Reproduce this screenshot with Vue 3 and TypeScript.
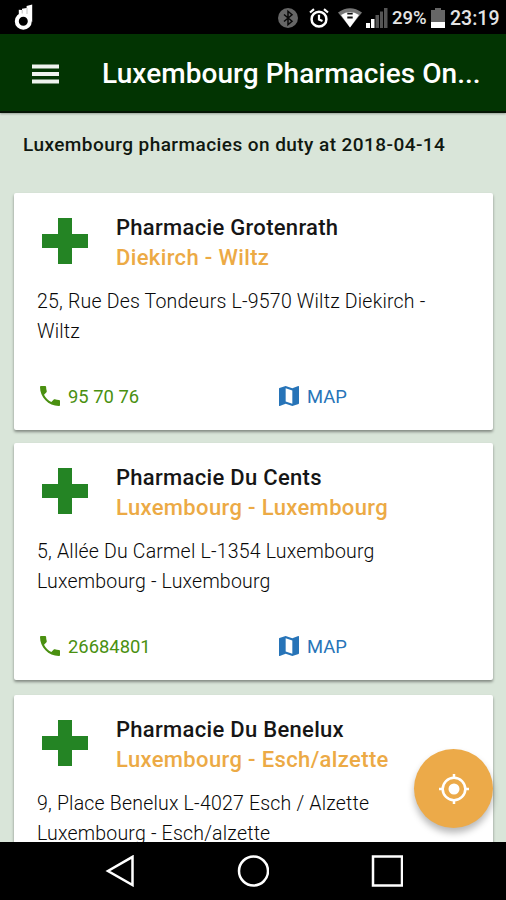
<script setup lang="ts">
interface Pharmacy {
  name: string
  region: string
  address: string[]
  phone: string
}

const pharmacies: Pharmacy[] = [
  {
    name: 'Pharmacie Grotenrath',
    region: 'Diekirch - Wiltz',
    address: ['25, Rue Des Tondeurs L-9570 Wiltz Diekirch -', 'Wiltz'],
    phone: '95 70 76',
  },
  {
    name: 'Pharmacie Du Cents',
    region: 'Luxembourg - Luxembourg',
    address: ['5, Allée Du Carmel L-1354 Luxembourg', 'Luxembourg - Luxembourg'],
    phone: '26684801',
  },
  {
    name: 'Pharmacie Du Benelux',
    region: 'Luxembourg - Esch/alzette',
    address: ['9, Place Benelux L-4027 Esch / Alzette', 'Luxembourg - Esch/alzette'],
    phone: '',
  },
]
</script>

<template>
  <div class="screen">
    <div class="status">
      <svg class="hand" viewBox="0 0 20 26">
        <circle cx="9.3" cy="17.200" r="6.500" fill="none" stroke="#fff" stroke-width="4" />
        <path d="M4.800 12V5.800L8 6V4.800L12.600 4V2L18.200 .5V18L15 14.500Q13 11.500 9 11.500Z" fill="#fff" />
        <path d="M8.200 6V9.500M13 4V10" stroke="#999" stroke-width=".6" />
      </svg>
      <div class="indicators">
        <svg class="bluetooth" viewBox="0 0 20 20">
          <circle cx="10" cy="10" r="10" fill="#666" />
          <path d="M6 6.5L14 13.3L10 16.7V3.3L14 6.7L6 13.5" fill="none" stroke="#080808" stroke-width="1.5" />
        </svg>
        <svg class="alarm" viewBox="0 0 20 20">
          <circle cx="10" cy="11.2" r="7.4" fill="none" stroke="#fff" stroke-width="2.5" />
          <path d="M10 6.7V11.5L13.5 13M1 4.5L5 1.2M19 4.5L15 1.2" fill="none" stroke="#fff" stroke-width="2.200" />
        </svg>
        <svg class="wifi" viewBox="0 0 24 20">
          <path d="M0 4.5Q12-4 24 4.5L12 19.5Z" fill="#777" />
          <path d="M3 7Q12 1 21 7L12 19.5Z" fill="#fff" />
          <path d="M9.3 5.600H14.7M9.3 9.500H14.7" stroke="#111" stroke-width="1.8" />
        </svg>
        <svg class="signal" viewBox="0 0 22 20">
          <path d="M0 15h4v5H0zM5 11h3.5v9H5z" fill="#fff" />
          <path d="M9.5 7H13v13H9.500zM14 3.500h3V20h-3zM18 0h3.500v20H18z" fill="#555" />
        </svg>
        <span class="percent">29%</span>
        <svg class="battery" viewBox="0 0 14 20">
          <path d="M4 0h6v2h4v12H0V2h4z" fill="#666" />
          <path d="M0 14h14v6H0z" fill="#fff" />
        </svg>
        <span class="clock">23:19</span>
      </div>
    </div>
    <header class="appbar">
      <svg class="menu" viewBox="0 0 27 20">
        <path d="M0 2.500h27M0 10h27M0 17.500h27" stroke="#eef2ee" stroke-width="4" />
      </svg>
      <h1 class="title">Luxembourg Pharmacies On...</h1>
    </header>
    <main class="content">
      <p class="notice">Luxembourg pharmacies on duty at 2018-04-14</p>
      <div class="list">
        <article v-for="p in pharmacies" :key="p.name" class="card">
          <div class="head">
            <svg class="cross" viewBox="0 0 46 46">
              <path d="M16 0h14v16h16v14H30v16H16V30H0V16h16z" fill="#248424" />
            </svg>
            <div>
              <h2 class="name">{{ p.name }}</h2>
              <h3 class="region">{{ p.region }}</h3>
            </div>
          </div>
          <p class="address">
            <span v-for="line in p.address" :key="line" class="line">{{ line }}</span>
          </p>
          <div v-if="p.phone" class="actions">
            <a class="action call">
              <svg class="icon" viewBox="3 3 18 18">
                <path fill="currentColor" d="M6.620 10.790c1.440 2.830 3.760 5.140 6.590 6.590l2.200-2.200c.27-.27.67-.36 1.020-.24 1.120.37 2.330.57 3.570.57.55 0 1 .45 1 1V20c0 .55-.45 1-1 1-9.390 0-17-7.610-17-17 0-.55.45-1 1-1h3.500c.55 0 1 .45 1 1 0 1.250.2 2.450.57 3.570.11.35.03.74-.25 1.020l-2.200 2.200z" />
              </svg>
              <span>{{ p.phone }}</span>
            </a>
            <a class="action map">
              <svg class="icon" viewBox="3 3 18 18">
                <path fill="currentColor" d="M20.500 3l-.16.03L15 5.100 9 3 3.360 4.900c-.21.07-.36.25-.36.48V20.500c0 .28.22.5.5.5l.16-.03L9 18.900l6 2.100 5.640-1.900c.21-.07.36-.25.36-.48V3.500c0-.28-.22-.5-.5-.5zM15 19l-6-2.110V5l6 2.110V19z" />
              </svg>
              <span>MAP</span>
            </a>
          </div>
        </article>
      </div>
    </main>
    <button class="fab" aria-label="Locate">
      <svg class="locate" viewBox="0 0 30 30">
        <circle cx="15" cy="15" r="11.300" fill="none" stroke="#fff" stroke-width="2.500" />
        <circle cx="15" cy="15" r="5.500" fill="#fff" />
        <path d="M15 0v4M15 26v4M0 15h4M26 15h4" stroke="#fff" stroke-width="2.500" />
      </svg>
    </button>
    <nav class="navbar">
      <svg class="nav-icon" viewBox="0 0 32 32">
        <path d="M29.500 1.800V30L5 16Z" fill="none" stroke="#fff" stroke-width="2.500" />
      </svg>
      <svg class="nav-icon" viewBox="0 0 32 32">
        <circle cx="16.500" cy="16" r="14.500" fill="none" stroke="#fff" stroke-width="2.500" />
      </svg>
      <svg class="nav-icon" viewBox="0 0 32 32">
        <path d="M2 1.500h29v29H2z" fill="none" stroke="#fff" stroke-width="2.500" />
      </svg>
    </nav>
  </div>
</template>

<style>
body {
  margin: 0;
}
</style>

<style scoped>
.screen {
  position: relative;
  display: flex;
  flex-direction: column;
  width: 506px;
  height: 900px;
  overflow: hidden;
  background: #d9e5d9;
  font-family: Roboto, sans-serif;
}
h1, h2, h3, p {
  margin: 0;
  white-space: nowrap;
}
svg {
  display: block;
  flex: none;
}
.status {
  flex: none;
  display: flex;
  justify-content: space-between;
  align-items: flex-start;
  height: 34px;
  box-sizing: border-box;
  padding: 4px 8px 0 14px;
  background: #000;
  color: #e4e4e4;
}
.hand {
  width: 20px;
  height: 26px;
}
.indicators {
  display: flex;
  align-items: center;
  height: 28px;
}
.bluetooth { width: 20px; height: 20px; margin-right: 11px; }
.alarm { width: 20px; height: 20px; margin-right: 9px; }
.wifi { width: 24px; height: 20px; margin-right: 4px; }
.signal { width: 22px; height: 20px; margin-right: 4px; }
.percent { width: 35px; font-size: 18.500px; font-weight: 500; margin-right: 4px; }
.battery { width: 14px; height: 20px; margin-right: 5px; }
.clock { width: 48px; font-size: 19.500px; font-weight: 500; }
.appbar {
  flex: none;
  display: flex;
  align-items: center;
  height: 79px;
  box-sizing: border-box;
  padding: 3px 0 0 32px;
  background: #023402;
  border-bottom: 2px solid #051505;
  box-shadow: 0 1px 2px rgba(0, 0, 0, 0.3);
}
.menu {
  width: 27px;
  height: 20px;
  margin-right: 43px;
}
.title {
  font-size: 28px;
  font-weight: 500;
  line-height: 36px;
  letter-spacing: 0.05px;
  color: #fff;
}
.content {
  flex: 1;
  min-height: 0;
  overflow: hidden;
}
.notice {
  padding: 19px 0 0 23px;
  height: 61px;
  font-size: 19px;
  font-weight: 500;
  line-height: 26px;
  letter-spacing: 0.44px;
  color: #101810;
}
.list {
  display: flex;
  flex-direction: column;
  gap: 14px;
  padding: 0 13.500px 0 14px;
}
.card {
  height: 237px;
  flex: none;
  box-sizing: border-box;
  padding: 20px 23px 0;
  border-radius: 2px;
  background: #fff;
  box-shadow: 0 2px 3px rgba(0, 0, 0, 0.4);
}
.card:nth-child(2) {
  margin-top: -0.6px;
  margin-bottom: 0.6px;
}
.head {
  display: flex;
  height: 74px;
}
.cross {
  width: 46px;
  height: 46px;
  margin: 5px 28px 0 5px;
}
.name, .region {
  font-size: 22px;
  font-weight: 500;
  line-height: 29.500px;
  letter-spacing: 0.3px;
}
.name { color: #161616; }
.region { color: #ecaa45; letter-spacing: 0.36px; }
.address {
  height: 94px;
  font-size: 19.500px;
  font-weight: 300;
  letter-spacing: 0.2px;
  line-height: 30px;
  color: #080808;
}
.line { display: block; }
.actions {
  display: grid;
  grid-template-columns: 239px 1fr;
  padding-left: 3px;
}
.action {
  display: flex;
  align-items: center;
  gap: 8px;
  height: 30px;
  font-size: 18.400px;
}
.icon {
  width: 20px;
  height: 20px;
}
.call { color: #4a9010; }
.map { color: #2774b8; }
.fab {
  position: absolute;
  left: 414px;
  top: 749px;
  display: grid;
  place-items: center;
  width: 79px;
  height: 79px;
  padding: 0;
  border: 0;
  border-radius: 50%;
  background: #ecaa49;
  box-shadow: 0 5px 7px rgba(0, 0, 0, 0.28);
}
.locate {
  width: 30px;
  height: 30px;
}
.navbar {
  flex: none;
  position: relative;
  display: flex;
  justify-content: center;
  gap: 102px;
  height: 58px;
  box-sizing: border-box;
  padding-top: 13px;
  background: #000;
}
.nav-icon {
  width: 32px;
  height: 32px;
}
</style>
